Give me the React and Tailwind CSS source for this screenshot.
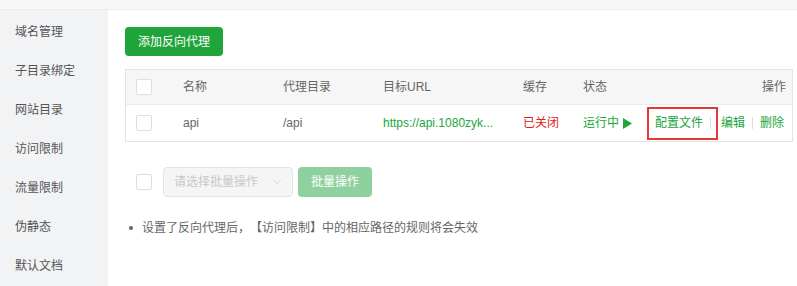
import { ChevronDown } from 'lucide-react';

const FONT = { fontFamily: '"Liberation Sans", "Noto Sans CJK SC", sans-serif' };

const MENU = ['域名管理', '子目录绑定', '网站目录', '访问限制', '流量限制', '伪静态', '默认文档'];

function Box() {
  return <span className="block w-4 h-4 rounded-[2px] border border-[#dcdfe6] bg-white" />;
}

export default function App() {
  return (
    <div className="w-[797px] h-[286px] overflow-hidden bg-white text-[12px] text-[#666] [text-spacing-trim:space-all]" style={FONT}>
      <div className="h-[10px] bg-[#f7f7f7] border-b border-[#ececec]" />
      <div className="flex h-[276px]">
        {/* side menu */}
        <div className="w-[108px] shrink-0 bg-[#f2f3f5] pt-[2px] flex flex-col">
          {MENU.map((m) => (
            <div key={m} className="h-[39px] pl-[15px] flex items-center text-[12px] text-[#555]">{m}</div>
          ))}
        </div>

        {/* content */}
        <div className="flex-1 pl-[17px] pr-[4px] pt-[17px]">
          <button className="h-[29px] px-[13px] rounded-[4px] bg-[#20a53a] text-white text-[12px]">添加反向代理</button>

          <div className="mt-[13px] border border-[#e4e4e4]">
            <div className="h-[35px] bg-[#f6f6f6] border-b border-[#ececec] flex items-center text-[#666]">
              <div className="w-[57px] pl-[10px]"><Box /></div>
              <div className="w-[100px]">名称</div>
              <div className="w-[100px]">代理目录</div>
              <div className="w-[140px]">目标URL</div>
              <div className="w-[60px]">缓存</div>
              <div className="flex-1">状态</div>
              <div className="pr-[6px]">操作</div>
            </div>
            <div className="h-[36px] flex items-center whitespace-nowrap">
              <div className="w-[57px] pl-[10px]"><Box /></div>
              <div className="w-[100px] text-[#666]">api</div>
              <div className="w-[100px] text-[#666]">/api</div>
              <div className="w-[140px] text-[#20a53a]">https://api.1080zyk...</div>
              <div className="w-[60px] text-[#e02020]">已关闭</div>
              <div className="w-[64px] shrink-0 text-[#20a53a] flex items-center gap-[4px]">
                运行中
                <svg width="9" height="11" viewBox="0 0 9 11"><path d="M0 0 L9 5.5 L0 11 Z" fill="#20a53a" /></svg>
              </div>
              <div className="flex-1 flex items-center justify-end h-full pr-[8px] text-[#20a53a]">
                <span className="shrink-0 h-[33px] w-[71px] border-2 border-[#e33838] flex items-center pl-[6px]">
                  配置文件
                  <span className="w-px h-[12px] bg-[#ddd] ml-[7px]" />
                </span>
                <span className="shrink-0 ml-[3px]">编辑</span>
                <span className="shrink-0 w-px h-[12px] bg-[#ddd] mx-[7px]" />
                <span className="shrink-0">删除</span>
              </div>
            </div>
          </div>

          <div className="mt-[25px] flex items-center pl-[11px]">
            <Box />
            <div className="ml-[11px] w-[130px] h-[30px] rounded-[4px] border border-[#e4e4e4] bg-[#f5f5f5] flex items-center justify-between pl-[10px] pr-[8px] text-[#c8c8c8]">
              <span>请选择批量操作</span>
              <ChevronDown size={14} strokeWidth={1.2} color="#c8c8c8" />
            </div>
            <button className="ml-[5px] h-[30px] w-[74px] rounded-[4px] bg-[#8fd19e] text-white text-[12px]">批量操作</button>
          </div>

          <ul className="mt-[22px] pl-[4px] text-[#666]">
            <li className="flex items-center gap-[9px]">
              <span className="w-[4px] h-[4px] rounded-full bg-[#666]" />
              设置了反向代理后，【访问限制】中的相应路径的规则将会失效
            </li>
          </ul>
        </div>
      </div>
    </div>
  );
}
